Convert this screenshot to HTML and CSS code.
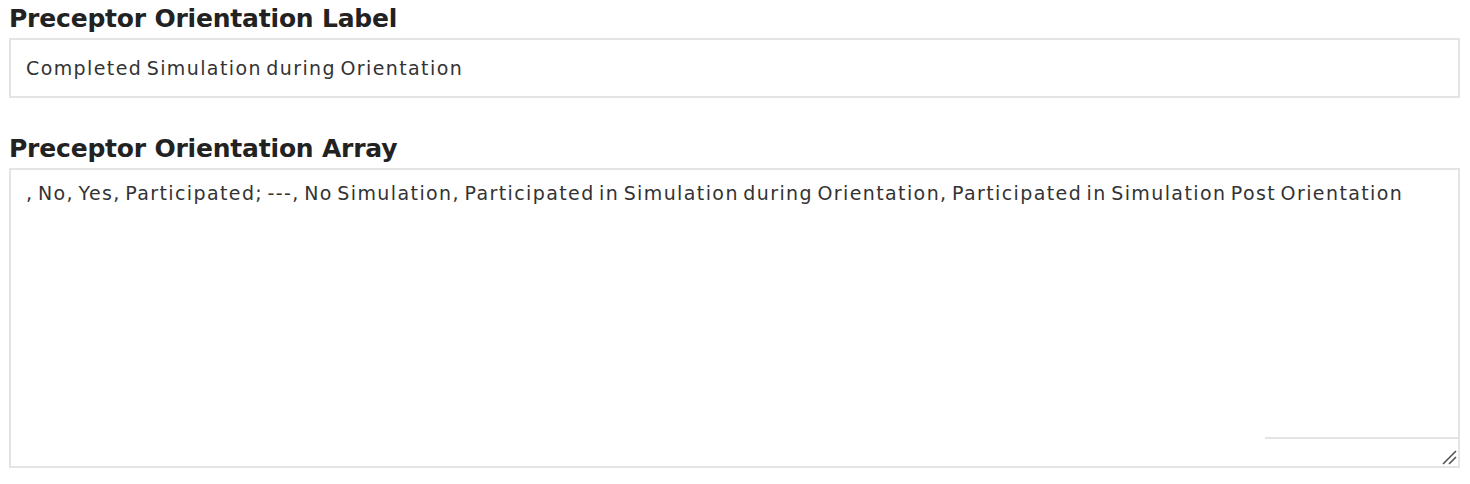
FILE: index.html
```html
<!DOCTYPE html>
<html>
  <head>
    <title>Preceptor Orientation</title>
    <meta charset="utf-8" />
    <meta name="viewport" content="width=device-width, initial-scale=1.0" />
    <link rel="stylesheet" href="styles.css">
  </head>
  <body>
    <div class="form">
      <div class="field">
        <label class="field-label" for="orient-label">Preceptor Orientation Label</label>
        <input class="field-input" id="orient-label" type="text" value="Completed Simulation during Orientation">
      </div>
      <div class="field">
        <label class="field-label" for="orient-array">Preceptor Orientation Array</label>
        <div class="area-wrap">
          <textarea class="field-area" id="orient-array">, No, Yes, Participated; ---, No Simulation, Participated in Simulation during Orientation, Participated in Simulation Post Orientation</textarea>
          <span class="area-rule"></span>
          <svg class="area-grip" width="16" height="16" viewBox="0 0 16 16">
            <path d="M2 15 L15 2 M8 15 L15 8" stroke="#555" stroke-width="1.6" fill="none"/>
          </svg>
        </div>
      </div>
    </div>
  </body>
</html>
```

FILE: styles.css
```css
body {
  margin: 0;
  padding: 0 10px 0 9px;
  background: #fff;
  font-family: "DejaVu Sans", "Open Sans", sans-serif;
  color: #333;
}
.form {
  display: flex;
  flex-direction: column;
  gap: 32px;
}
.field {
  display: flex;
  flex-direction: column;
}
.field-label {
  font-size: 25px;
  font-weight: bold;
  color: #222;
  line-height: 38px;
  letter-spacing: -0.2px;
}
.field-input,
.field-area {
  box-sizing: border-box;
  width: 100%;
  margin: 0;
  border: 2px solid #e4e4e4;
  border-radius: 0;
  background: #fff;
  font-family: inherit;
  font-size: 19px;
  letter-spacing: 1.4px;
  word-spacing: -3px;
  color: #333;
  outline: none;
}
.field-input {
  height: 60px;
  padding: 0 15px;
}
.area-wrap {
  position: relative;
}
.field-area {
  display: block;
  height: 300px;
  padding: 10px 15px;
  line-height: 26px;
  resize: none;
}
.area-rule {
  position: absolute;
  left: 1256px;
  right: 2px;
  top: 269px;
  height: 2px;
  background: #e4e4e4;
}
.area-grip {
  position: absolute;
  right: 3px;
  bottom: 3px;
}
```
